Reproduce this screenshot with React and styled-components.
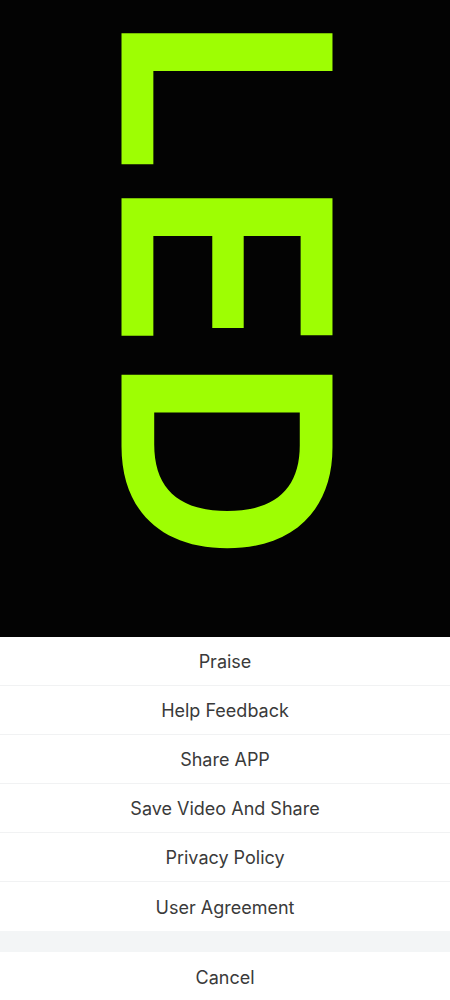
import React from 'react';
import styled, { createGlobalStyle } from 'styled-components';

const GlobalStyle = createGlobalStyle`
    html, body {
        margin: 0;
        padding: 0;
        background: #000;
    }
    * {
        box-sizing: border-box;
    }
`;

const Page = styled.div`
    width: 450px;
    height: 1000px;
    display: flex;
    flex-direction: column;
    overflow: hidden;
    font-family: Inter, Roboto, "Noto Sans", sans-serif;
`;

const Stage = styled.div`
    height: 637px;
    flex-shrink: 0;
    background: #030303;
    display: flex;
    justify-content: center;
    overflow: hidden;
`;

const LedText = styled.div`
    writing-mode: vertical-rl;
    font-family: Inter, Roboto, sans-serif;
    font-weight: 600;
    font-size: 290px;
    line-height: 1;
    color: #9efe03;
    letter-spacing: ${p => p.$spacing}px;
    padding-top: 12px;
    margin-left: 3px;
`;

const Sheet = styled.div`
    flex: 1;
    background: #fff;
    display: flex;
    flex-direction: column;
`;

const Item = styled.div`
    height: 49px;
    flex-shrink: 0;
    display: flex;
    align-items: center;
    justify-content: center;
    font-size: 18px;
    color: #3a3a3a;
    padding-top: 1px;
    border-bottom: ${p => (p.$last ? 'none' : '1px solid #f1f2f3')};
`;

const Gap = styled.div`
    height: 21px;
    flex-shrink: 0;
    background: #f3f5f6;
`;

const items = [
    'Praise',
    'Help Feedback',
    'Share APP',
    'Save Video And Share',
    'Privacy Policy',
    'User Agreement',
];

export default function App() {
    return (
        <Page>
            <GlobalStyle />
            <Stage>
                <LedText $spacing={1}>LED</LedText>
            </Stage>
            <Sheet>
                {items.map((t, i) => (
                    <Item key={t} $last={i === items.length - 1}>{t}</Item>
                ))}
                <Gap />
                <Item $last>Cancel</Item>
            </Sheet>
        </Page>
    );
}
